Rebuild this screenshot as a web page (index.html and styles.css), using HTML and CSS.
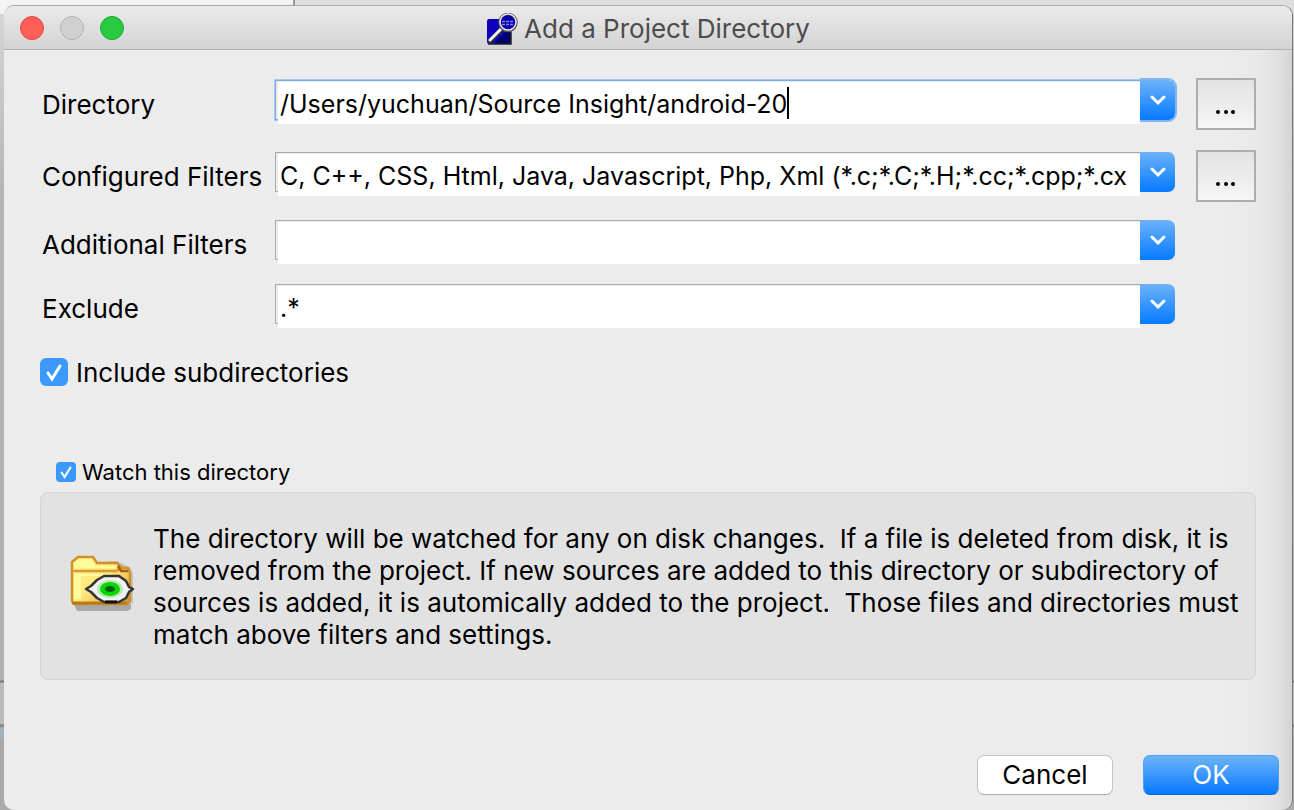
FILE: index.html
```html
<!DOCTYPE html>
<html lang="en">
<head>
<meta charset="utf-8">
<title>Add a Project Directory</title>
<link rel="stylesheet" href="styles.css">
</head>
<body>
<main class="dialog">
  <header class="titlebar">
    <div class="lights">
      <button class="light close" type="button" aria-label="Close"></button>
      <button class="light minimize" type="button" aria-label="Minimize" disabled></button>
      <button class="light zoom" type="button" aria-label="Zoom"></button>
    </div>
    <h1 class="title">
      <svg class="app-icon" viewBox="0 0 32 32" aria-hidden="true">
        <path d="M1 8Q1 6 3 6H16V18H25V31H3Q1 31 1 29Z" fill="#0c00bd"/>
        <path d="M8 31L25 14V31Z" fill="#04006e"/>
        <path d="M2 31H25V19" fill="none" stroke="#222" stroke-width="1.5"/>
        <path d="M4 28L15 17" stroke="#333" stroke-width="5" stroke-linecap="round"/>
        <path d="M4 27L15 16" stroke="#f4f4ea" stroke-width="3" stroke-linecap="round"/>
        <circle cx="22" cy="9.500" r="8.500" fill="#0900ac" stroke="#555" stroke-width="2.500"/>
        <circle cx="22" cy="9" r="8" fill="none" stroke="#e6e6e6" stroke-width="1.500"/>
        <path d="M16 8.500H27M16 11.500H27" stroke="#8280e0" stroke-width="1.500" stroke-dasharray="3 1"/>
      </svg>
      <span>Add a Project Directory</span>
    </h1>
  </header>

  <form class="content">
    <div class="fields">
      <label class="label" for="directory">Directory</label>
      <div class="combo focused">
        <div class="entry"><input id="directory" type="text" value="/Users/yuchuan/Source Insight/android-20"><span class="mirror" aria-hidden="true"><span class="ghost">/Users/yuchuan/Source Insight/android-20</span><i class="caret"></i></span></div>
        <button class="drop" type="button" aria-label="Show directories"><svg viewBox="0 0 16 10"><path d="M2 2L8 8L14 2"/></svg></button>
      </div>
      <button class="browse" type="button" aria-label="Browse for directory"><svg viewBox="0 0 20 4"><circle cx="2" cy="2" r="2"/><circle cx="10" cy="2" r="2"/><circle cx="17" cy="2" r="2"/></svg></button>

      <label class="label" for="configured">Configured Filters</label>
      <div class="combo">
        <div class="entry"><input id="configured" type="text" value="C, C++, CSS, Html, Java, Javascript, Php, Xml (*.c;*.C;*.H;*.cc;*.cpp;*.cx"></div>
        <button class="drop" type="button" aria-label="Show configured filters"><svg viewBox="0 0 16 10"><path d="M2 2L8 8L14 2"/></svg></button>
      </div>
      <button class="browse" type="button" aria-label="Edit configured filters"><svg viewBox="0 0 20 4"><circle cx="2" cy="2" r="2"/><circle cx="10" cy="2" r="2"/><circle cx="17" cy="2" r="2"/></svg></button>

      <label class="label" for="additional">Additional Filters</label>
      <div class="combo">
        <div class="entry"><input id="additional" type="text"></div>
        <button class="drop" type="button" aria-label="Show additional filters"><svg viewBox="0 0 16 10"><path d="M2 2L8 8L14 2"/></svg></button>
      </div>
      <span></span>

      <label class="label" for="exclude">Exclude</label>
      <div class="combo">
        <div class="entry"><input id="exclude" type="text" value=".*"></div>
        <button class="drop" type="button" aria-label="Show excludes"><svg viewBox="0 0 16 10"><path d="M2 2L8 8L14 2"/></svg></button>
      </div>
      <span></span>
    </div>

    <label class="check">
      <span class="tick"><input type="checkbox" checked><svg viewBox="0 0 28 28" aria-hidden="true"><path d="M8 15L12 21L20 8"/></svg></span>
      <span class="caption">Include subdirectories</span>
    </label>

    <label class="check small">
      <span class="tick"><input type="checkbox" checked><svg viewBox="0 0 28 28" aria-hidden="true"><path d="M8 15L12 21L20 8"/></svg></span>
      <span>Watch this directory</span>
    </label>

    <section class="panel">
      <svg class="folder" viewBox="0 0 66 58" aria-hidden="true">
        <defs><linearGradient id="paper" x1="0" y1="0" x2="1" y2="1"><stop offset="0" stop-color="#fff68a"/><stop offset=".5" stop-color="#ffe87c"/><stop offset="1" stop-color="#d0902c"/></linearGradient></defs>
        <path d="M5 50H62V55L58 57H8Z" fill="#a8a8a8"/>
        <path d="M38 7H48L62 14L64 20V50L58 49Z" fill="#c4c4c4"/>
        <path d="M3 8L9 3H24L28 9H48L53 14H59L61 19V47L58 50H5L3 47Z" fill="url(#paper)" stroke="#cf9228" stroke-width="2.500"/>
        <path d="M5 9L10 5H22L26 12H46V14H5Z" fill="#fffa9c"/>
        <path d="M3 17H47L52 14" fill="none" stroke="#d39a35" stroke-width="2.500"/>
        <path d="M49 12L52 17H59" fill="none" stroke="#a85f10" stroke-width="2.500"/>
        <path d="M5 20H42V22H12V45H5Z" fill="#fffaa0"/>
        <path d="M3 49H58" stroke="#b97a16" stroke-width="3"/>
        <path d="M17 35L22 32L28 26L35 22H50L57 27L60 33L64 35L60 38L57 44L50 48H35L28 44L22 38Z" fill="#f2f2f2" stroke="#343434" stroke-width="2.500" stroke-linejoin="round"/>
        <ellipse cx="41" cy="35" rx="13" ry="9" fill="#b6ebb0"/>
        <ellipse cx="41" cy="35" rx="10" ry="7" fill="#0bd40b"/>
        <ellipse cx="41" cy="35" rx="5" ry="3" fill="#00600c"/>
        <path d="M36 48H48" stroke="#111" stroke-width="3"/>
      </svg>
      <p class="note">The directory will be watched for any on disk changes.&nbsp; If a file is deleted from disk, it is<br>removed from the project. If new sources are added to this directory or subdirectory of<br>sources is added, it is automically added to the project.&nbsp; Those files and directories must<br>match above filters and settings.</p>
    </section>

    <footer class="actions">
      <button class="button" type="button">Cancel</button>
      <button class="button primary" type="submit">OK</button>
    </footer>
  </form>
</main>
</body>
</html>
```
FILE: styles.css
```css
* { box-sizing: border-box; }

body {
  margin: 0;
  min-height: 100vh;
  display: flex;
  padding: 5px 1px 0 4px;
  background:
    linear-gradient(90deg, #f3f3f3 293px, #999 293px, #999 295px, #dedede 295px) 0 0 / 100% 14px no-repeat,
    linear-gradient(#d8d8d8, #b4b4b4 200px, #b0b0b0 680px, #777 681px, #777 682px, #bbb 683px, #bbb 724px, #777 725px, #a4b0bd 728px, #a4b0bd 738px, #aaa 739px);
  font-family: Inter, "Open Sans", sans-serif;
  font-size: 26px;
  line-height: 32px;
  color: #000;
}

button, input { font: inherit; color: inherit; }
button { padding: 0; }

.dialog {
  flex: 1;
  display: flex;
  flex-direction: column;
  border: 1px solid #aaa;
  border-width: 1px 1px 0 0;
  border-right-color: #777;
  border-radius: 10px;
  overflow: hidden;
  background: linear-gradient(270deg, #d4d4d4, #e2e2e2 16px, #e9e9e9 38px, #ececec 70px);
}

.titlebar {
  display: grid;
  grid-template-columns: 1fr auto 1fr;
  align-items: center;
  height: 44px;
  padding: 0 16px;
  border-bottom: 1px solid #b1b1b1;
  background: linear-gradient(#ebebeb, #d3d3d3);
}

.lights { display: flex; gap: 16px; }
.light { width: 24px; height: 24px; border-radius: 50%; border: 1px solid; }
.close { background: #ff5f57; border-color: #e2463f; }
.minimize { background: #d0d0d0; border-color: #b3b3b3; }
.zoom { background: #28ca41; border-color: #14ae2c; }

.title {
  display: flex;
  align-items: center;
  gap: 6px;
  margin: 0;
  padding-top: 2px;
  font-size: 26px;
  font-weight: 400;
  color: #4c4c4c;
}
.app-icon { width: 32px; height: 32px; }

.content {
  flex: 1;
  display: flex;
  flex-direction: column;
  padding: 28px 13px 15px 36px;
}

.fields {
  display: grid;
  grid-template-columns: 235px 1fr 60px;
  grid-template-rows: 72px 68px 64px 76px;
  align-items: start;
  margin-right: 23px;
}
.label { padding: 11px 0 0 2px; white-space: nowrap; }

.combo {
  position: relative;
  display: flex;
  height: 44px;
  margin: 2px 21px 0 0;
}
.entry {
  position: relative;
  flex: 1;
  min-width: 0;
  height: 40px;
  border: 1px solid #aaa;
  border-right: 0;
  font-size: 25px;
}
.entry input {
  display: block;
  width: calc(100% - 2px);
  height: 42px;
  margin: 1px 0 0 2px;
  padding: 2px 0 0 2px;
  border: 0;
  outline: 0;
  background: #fff;
  caret-color: transparent;
}
.focused .entry { border-color: #77aae6; box-shadow: 0 0 0 1px #a7c8ef; }
.focused .drop { box-shadow: 0 0 0 2px #82b6ef; clip-path: inset(-2px -2px -2px 0); }

.mirror {
  position: absolute;
  inset: 0 0 0 4px;
  display: flex;
  align-items: center;
  pointer-events: none;
  white-space: pre;
}
.ghost { visibility: hidden; }
.caret { width: 2px; height: 32px; background: #000; margin-top: 6px; }

.drop {
  display: grid;
  place-items: center;
  width: 35px;
  height: 40px;
  border: 0;
  border-radius: 0 7px 7px 0;
  background: linear-gradient(#6cb3fa, #067aff);
}
.drop svg { width: 16px; height: 10px; overflow: visible; }
.drop path, .tick path { fill: none; stroke: #fff; stroke-width: 3; stroke-linecap: round; }

.browse {
  display: grid;
  place-items: center;
  height: 52px;
  padding-top: 16px;
  border: 2px solid #adadad;
  background: linear-gradient(#e2e2e2, #f6f6f6);
}
.browse svg { width: 20px; height: 4px; }

.check { display: flex; align-items: center; gap: 8px; align-self: flex-start; height: 28px; }
.caption { padding-top: 2px; }
.tick { display: grid; width: 28px; height: 28px; }
.tick > * { grid-area: 1 / 1; width: 100%; height: 100%; margin: 0; }
.tick input { appearance: none; border-radius: 6px; background: #3b99fc; }
.tick svg { pointer-events: none; }
.small { gap: 6px; margin: 72px 0 6px 16px; font-size: 22px; }
.small .tick { width: 20px; height: 20px; }
.small .tick input { border-radius: 4px; }

.panel {
  display: flex;
  align-items: center;
  gap: 18px;
  min-height: 188px;
  margin-right: 23px;
  padding: 2px 0 0 28px;
  border: 1px solid #d6d6d6;
  border-radius: 8px;
  background: #e2e2e2;
}
.folder { flex: none; width: 66px; height: 58px; margin-bottom: 8px; }
.note { margin: 0; white-space: nowrap; }

.actions { display: flex; justify-content: flex-end; gap: 30px; margin-top: auto; }
.button {
  width: 136px;
  height: 40px;
  border: 1px solid #c3c3c3;
  border-bottom-color: #aaa;
  border-radius: 7px;
  background: #fff;
}
.primary {
  border-color: #4ba0f8;
  border-bottom-color: #0868dc;
  background: linear-gradient(#6cb3fa, #067aff);
  color: #fff;
}
```
